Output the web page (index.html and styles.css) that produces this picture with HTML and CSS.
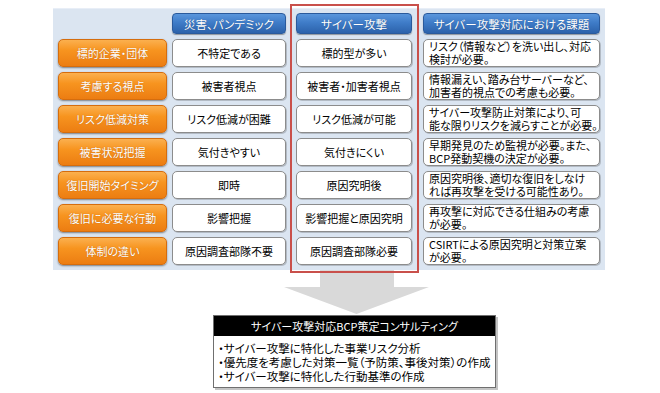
FILE: index.html
```html
<!DOCTYPE html>
<html lang="ja">
<head>
<meta charset="utf-8">
<link rel="stylesheet" href="styles.css">
</head>
<body>
<div class="page">
  <div class="panel">
    <div class="grid">
      <div class="blank"></div>
      <div class="hd c1">災害、パンデミック</div>
      <div class="hd c2">サイバー攻撃</div>
      <div class="hd c3">サイバー攻撃対応における課題</div>

      <div class="lbl">標的企業・団体</div>
      <div class="cell c1">不特定である</div>
      <div class="cell c2">標的型が多い</div>
      <div class="cell c3 note">リスク（情報など）を洗い出し、対応<br>検討が必要。</div>

      <div class="lbl">考慮する視点</div>
      <div class="cell c1">被害者視点</div>
      <div class="cell c2">被害者・加害者視点</div>
      <div class="cell c3 note">情報漏えい、踏み台サーバーなど、<br>加害者的視点での考慮も必要。</div>

      <div class="lbl">リスク低減対策</div>
      <div class="cell c1">リスク低減が困難</div>
      <div class="cell c2">リスク低減が可能</div>
      <div class="cell c3 note">サイバー攻撃防止対策により、可<br>能な限りリスクを減らすことが必要。</div>

      <div class="lbl">被害状況把握</div>
      <div class="cell c1">気付きやすい</div>
      <div class="cell c2">気付きにくい</div>
      <div class="cell c3 note">早期発見のため監視が必要。また、<br>BCP発動契機の決定が必要。</div>

      <div class="lbl">復旧開始タイミング</div>
      <div class="cell c1">即時</div>
      <div class="cell c2">原因究明後</div>
      <div class="cell c3 note">原因究明後、適切な復旧をしなけ<br>れば再攻撃を受ける可能性あり。</div>

      <div class="lbl">復旧に必要な行動</div>
      <div class="cell c1">影響把握</div>
      <div class="cell c2">影響把握と原因究明</div>
      <div class="cell c3 note">再攻撃に対応できる仕組みの考慮<br>が必要。</div>

      <div class="lbl">体制の違い</div>
      <div class="cell c1">原因調査部隊不要</div>
      <div class="cell c2">原因調査部隊必要</div>
      <div class="cell c3 note">CSIRTによる原因究明と対策立案<br>が必要。</div>
    </div>
    <div class="highlight"></div>
  </div>

  <div class="arrow">
    <svg width="145" height="45" viewBox="0 0 145 45">
      <polygon points="36,0 110,0 110,17 145,17 72.5,44 0,17 36,17" fill="#d9d9d9"/>
    </svg>
  </div>

  <div class="box">
    <div class="box-title">サイバー攻撃対応BCP策定コンサルティング</div>
    <div class="box-body">
      <div>・サイバー攻撃に特化した事業リスク分析</div>
      <div>・優先度を考慮した対策一覧（予防策、事後対策）の作成</div>
      <div>・サイバー攻撃に特化した行動基準の作成</div>
    </div>
  </div>
</div>
</body>
</html>
```
FILE: styles.css
```css
* { box-sizing: border-box; }
html, body {
  margin: 0;
  padding: 0;
  background: #ffffff;
}
body {
  width: 660px;
  height: 393px;
  overflow: hidden;
  font-family: "Noto Sans CJK JP", "Noto Sans", sans-serif;
  font-feature-settings: "palt";
  font-size: 11px;
  color: #000;
}
.page {
  display: flex;
  flex-direction: column;
  padding-top: 8px;
}
.panel {
  position: relative;
  margin-left: 53px;
  width: 552px;
  background: #dbe5f1;
  border-top: 1px solid #e8eef7;
  padding: 4px 5px 5px 5px;
}
.grid {
  display: grid;
  grid-template-columns: 109px 114px 121px 183px;
  grid-template-rows: 21px repeat(7, 28px);
  column-gap: 5px;
  row-gap: 5px;
}
.c2 { margin-left: 5px; }
.c3 { margin-left: 6px; }
.hd {
  display: flex;
  align-items: center;
  justify-content: center;
  color: #fff;
  font-size: 11.5px;
  border-radius: 4px;
  border: 1px solid #2a5a9c;
  background: linear-gradient(#5a96dc 0%, #3f7cc8 45%, #2c62ab 100%);
  box-shadow: 0 1px 1px rgba(0,0,0,0.35);
  text-shadow: 0 0 1px rgba(0,0,0,0.3);
}
.lbl {
  display: flex;
  align-items: center;
  justify-content: center;
  color: #fff;
  border-radius: 5px;
  border: 1px solid #d56d0e;
  background: linear-gradient(#fbb04f 0%, #f7941f 40%, #ec7d12 100%);
  box-shadow: 0 1px 2px rgba(0,0,0,0.45);
  text-shadow: 0 0 1px rgba(120,50,0,0.5);
}
.cell {
  display: flex;
  align-items: center;
  justify-content: center;
  background: #fff;
  border: 1px solid #8c8c8c;
  border-radius: 5px;
  box-shadow: 1px 1px 0 rgba(0,0,0,0.18);
}
.note {
  justify-content: flex-start;
  text-align: left;
  line-height: 13px;
  padding-left: 5px;
  white-space: nowrap;
}
.highlight {
  position: absolute;
  left: 237px;
  top: -5px;
  width: 129px;
  height: 269px;
  border: 2px solid #c9504b;
  pointer-events: none;
}
.arrow {
  margin-left: 284px;
  height: 45px;
  display: flex;
}
.arrow svg { display: block; }
.box {
  margin-left: 213px;
  width: 283px;
  border: 1px solid #6f6f6f;
  box-shadow: 2px 2px 0 #c4c4c4;
  background: #fff;
}
.box-title {
  background: #000;
  color: #fff;
  text-align: center;
  height: 20px;
  line-height: 20px;
}
.box-body {
  padding: 5px 4px 4px 4px;
  line-height: 14px;
  white-space: nowrap;
  font-size: 11.5px;
}
```
